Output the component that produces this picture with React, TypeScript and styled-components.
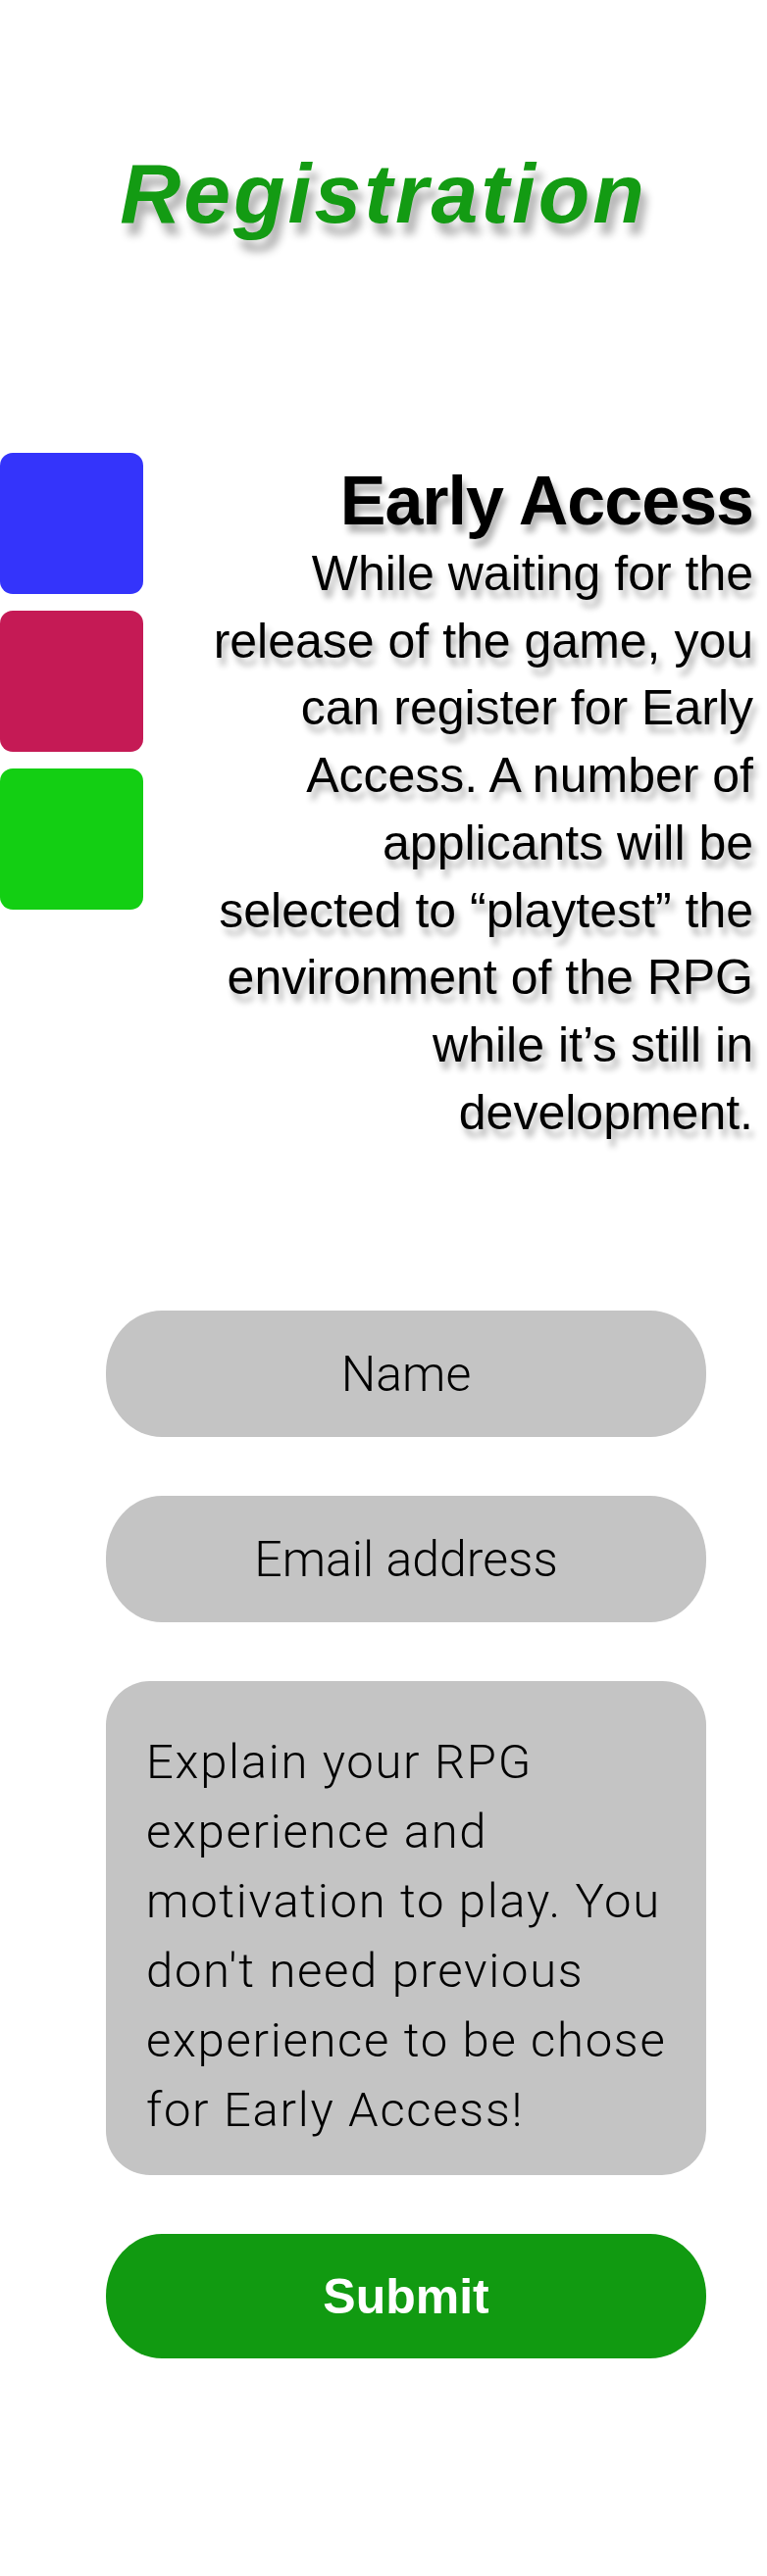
import styled, { createGlobalStyle } from "styled-components";

const GlobalStyle = createGlobalStyle`
  html, body {
    margin: 0;
    padding: 0;
    background: #ffffff;
  }
  body {
    font-family: "Liberation Sans", Arial, sans-serif;
    color: #000;
  }
`;

const Page = styled.main`
  width: 782px;
  min-height: 2628px;
  box-sizing: border-box;
  padding-top: 154px;
  display: flex;
  flex-direction: column;
`;

const Title = styled.h1`
  margin: 0;
  text-align: center;
  font-size: 86px;
  line-height: 1;
  font-style: italic;
  font-weight: 700;
  letter-spacing: 3px;
  color: #139b13;
  text-shadow: 6px 12px 8px rgba(0, 0, 0, 0.3);
`;

const Intro = styled.section`
  margin-top: 222px;
  display: flex;
  justify-content: space-between;
  align-items: flex-start;
  padding-right: 14px;
`;

const Swatches = styled.div`
  display: flex;
  flex-direction: column;
  gap: 17px;
`;

const Swatch = styled.div<{ $color: string }>`
  width: 146px;
  height: 144px;
  border-radius: 13px;
  background: ${(p) => p.$color};
`;

const Copy = styled.div`
  width: 566px;
  margin-top: 14px;
  text-align: right;
  text-shadow: 4px 8px 6px rgba(0, 0, 0, 0.3);
`;

const Heading = styled.h2`
  margin: 0 0 5px;
  font-size: 70px;
  line-height: 1;
  font-weight: 700;
  letter-spacing: -1px;
`;

const Text = styled.p`
  margin: 0;
  font-size: 50px;
  line-height: 68.7px;
`;

const Form = styled.form`
  margin-top: 168px;
  padding-left: 108px;
  width: 612px;
  display: flex;
  flex-direction: column;
  gap: 60px;
`;

const Field = styled.input`
  height: 127px;
  border: none;
  outline: none;
  border-radius: 57px / 63px;
  background: #c4c4c4;
  font-family: Roboto, "Liberation Sans", sans-serif;
  font-weight: 300;
  font-size: 50px;
  text-align: center;
  color: #000;
  &::placeholder {
    color: #000;
    opacity: 1;
  }
`;

const Area = styled.textarea`
  height: 504px;
  box-sizing: border-box;
  padding: 47px 26px 20px 41px;
  border: none;
  outline: none;
  resize: none;
  border-radius: 45px;
  background: #c4c4c4;
  font-family: Roboto, "Liberation Sans", sans-serif;
  font-weight: 300;
  font-size: 49px;
  line-height: 71px;
  letter-spacing: 1.7px;
  color: #000;
  overflow: hidden;
  &::placeholder {
    color: #000;
    opacity: 1;
  }
`;

const Submit = styled.button`
  height: 127px;
  border: none;
  border-radius: 57px / 63px;
  background: #119a11;
  color: #fff;
  font-family: "Liberation Sans", Arial, sans-serif;
  font-weight: 700;
  font-size: 50px;
  cursor: pointer;
`;

export default function App() {
  return (
    <>
      <GlobalStyle />
      <Page>
        <Title>Registration</Title>
        <Intro>
          <Swatches>
            <Swatch $color="#3434fb" />
            <Swatch $color="#c51a55" />
            <Swatch $color="#13cf13" />
          </Swatches>
          <Copy>
            <Heading>Early Access</Heading>
            <Text>
              While waiting for the release of the game, you can register for Early Access. A number of
              applicants will be selected to “playtest” the environment of the RPG while it’s still in
              development.
            </Text>
          </Copy>
        </Intro>
        <Form onSubmit={(e) => e.preventDefault()}>
          <Field name="name" type="text" placeholder="Name" />
          <Field name="email" type="email" placeholder="Email address" />
          <Area
            name="motivation"
            placeholder="Explain your RPG experience and motivation to play. You don't need previous experience to be chose for Early Access!"
          />
          <Submit type="submit">Submit</Submit>
        </Form>
      </Page>
    </>
  );
}
